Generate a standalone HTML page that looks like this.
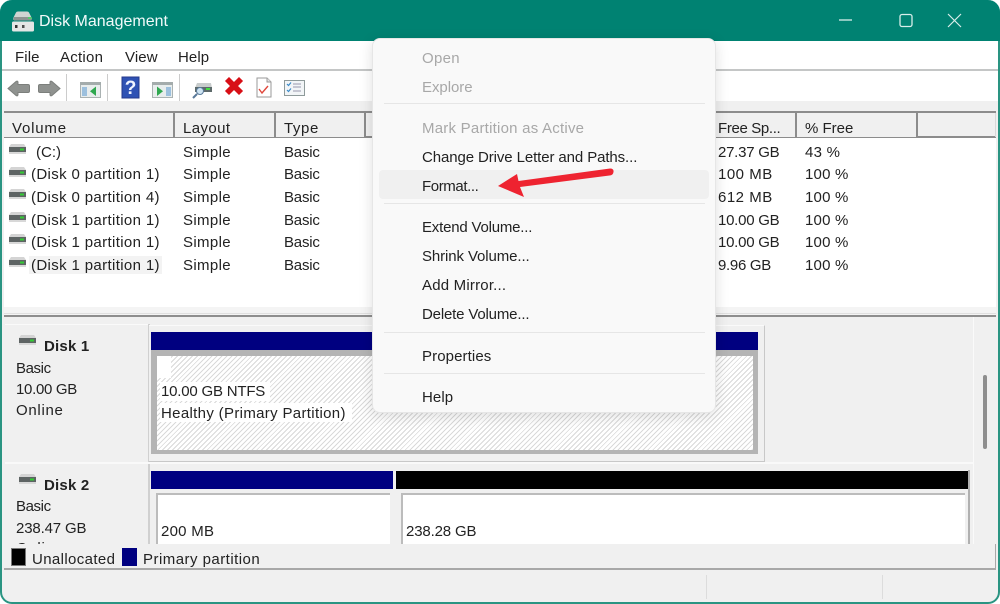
<!DOCTYPE html>
<html><head><meta charset="utf-8"><style>
*{box-sizing:border-box}
html,body{margin:0;padding:0;background:#fff}
body{width:1000px;height:604px;position:relative;overflow:hidden;font-family:"Liberation Sans",sans-serif;font-size:15px;color:#222}
.a{position:absolute}
.t{position:absolute;white-space:nowrap;line-height:18px;height:18px;margin-top:1px}
.hd{position:absolute;top:113px;height:24px;background:#f0f0f0;border-right:2px solid #8c8c8c}
.g{color:#a8a8a8}
.sep{position:absolute;left:384px;width:321px;height:1px;background:#e6e6e6}
.stripes{background:repeating-linear-gradient(135deg,#d9d9d9 0 1px,#fff 1px 3.5px)}
</style></head><body>
<div class="a" style="left:0;top:0;width:1000px;height:604px;background:#f0f0f0;border:2px solid #2a9482;border-top:0;border-radius:12px"></div>
<div class="a" style="left:0;top:0;width:1000px;height:41px;background:#008272;border-radius:12px 12px 0 0"></div>
<svg class="a" style="left:11px;top:11px" width="24" height="22" viewBox="0 0 24 22"><path d="M5 1.500q.5-1 2-1h9q1.500 0 2 1l2.500 5q1 2-1 3H3.500q-2-1-1-3z" fill="#cfd4d2"/><path d="M3 6h17.500q1 2-.5 3.500H3.500q-1.500-1.500-.5-3.500z" fill="#8d9492"/><rect x="17" y="6" width="3.500" height="2" fill="#4fd06a"/><path d="M2.500 10.500h19q1.500 0 1.500 1.500v7q0 1.500-1.500 1.500h-19Q1 20.500 1 19v-7q0-1.500 1.500-1.500z" fill="#e4e6e5"/><rect x="4" y="14" width="2.500" height="3" fill="#333"/><rect x="11" y="14" width="2.500" height="3" fill="#333" opacity=".85"/></svg>
<div class="t" style="left:39px;top:12px;color:#f2fafa;font-size:16px">Disk Management</div>
<svg class="a" style="left:838px;top:12px" width="130" height="18" viewBox="0 0 130 18" fill="none" stroke="#d8eeea" stroke-width="1.3"><path d="M1 8h13"/><rect x="62" y="2.500" width="12" height="12" rx="2"/><path d="M123 2l-13 13M110 2l13 13" stroke-width="1.200"/></svg>

<div class="a" style="left:2px;top:41px;width:996px;height:30px;background:#fff;border-bottom:2px solid #c4c6c6"></div>
<div class="t" style="left:15px;top:48px;letter-spacing:.1px">File</div>
<div class="t" style="left:60px;top:48px;letter-spacing:.25px">Action</div>
<div class="t" style="left:125px;top:48px;letter-spacing:.1px">View</div>
<div class="t" style="left:178px;top:48px;letter-spacing:.1px">Help</div>

<div class="a" style="left:2px;top:71px;width:996px;height:30px;background:#fff"></div>
<div class="a" style="left:2px;top:101px;width:996px;height:10px;background:#f0f0f0"></div>
<svg class="a" style="left:0;top:72px" width="320" height="30" viewBox="0 0 320 30">
<path d="M8 16.500l8-7q1.500-1 2 .5v2.500h10q1.500 0 1.500 1.500v5q0 1.500-1.500 1.500H18v2.500q-.5 1.500-2 .5z" fill="#8f928f" stroke="#7c7f7c" stroke-width="1"/>
<path d="M60 16.500l-8-7q-1.500-1-2 .5v2.500H40q-1.500 0-1.500 1.500v5q0 1.500 1.500 1.500h10v2.500q.5 1.500 2 .5z" fill="#8f928f" stroke="#7c7f7c" stroke-width="1"/>
<rect x="66" y="2" width="1" height="27" fill="#ccc"/><rect x="107" y="2" width="1" height="27" fill="#ccc"/><rect x="179" y="2" width="1" height="27" fill="#ccc"/>
<rect x="80.500" y="10.500" width="20" height="15" fill="#e8eded" stroke="#aab2b2"/><rect x="80" y="10" width="21" height="3" fill="#a4acac"/><rect x="82" y="15" width="5" height="9" fill="#9cc0de"/><path d="M96 14.500v9.500l-6-4.750z" fill="#2fa84f"/>
<rect x="122" y="5" width="17" height="21" fill="#2f52b4" stroke="#25398c"/>
<text x="130.500" y="22" font-family="Liberation Sans" font-weight="bold" font-size="19" fill="#f0f4ff" text-anchor="middle">?</text>
<rect x="152.500" y="10.500" width="20" height="15" fill="#e8eded" stroke="#aab2b2"/><rect x="152" y="10" width="21" height="3" fill="#a4acac"/><rect x="166" y="15" width="5" height="9" fill="#9cc0de"/><path d="M157 14.500v9.500l6-4.750z" fill="#2fa84f"/>
<path d="M197 11h14l1 5h-17z" fill="#c8cccc"/><rect x="195" y="15" width="17" height="5" fill="#5d6a6a"/><rect x="206" y="16" width="4" height="2" fill="#4d4"/><circle cx="200" cy="19" r="3.500" fill="#cfe4f2" stroke="#5a7a9a"/><path d="M197 22l-4 4" stroke="#5a7a9a" stroke-width="2"/>
<path d="M226 9l3-3 5 5 5-5 3 3-5 5 5 5-3 3-5-5-5 5-3-3 5-5z" fill="#d80f16" stroke="#d80f16" stroke-width="1.500"/>
<path d="M257 6h10l4 4v15h-14z" fill="#fff" stroke="#9a9a9a"/><path d="M267 6v4h4" fill="#e4e4e4" stroke="#9a9a9a"/><path d="M259 17l3 4 6-7" fill="none" stroke="#e0483c" stroke-width="1.400"/>
<rect x="284.500" y="8.500" width="20" height="15" fill="#f2f5f7" stroke="#8e9a9a"/><path d="M287 12l1.500 1.500 2.500-3M287 18l1.500 1.500 2.500-3" fill="none" stroke="#3a8ac8" stroke-width="1.200"/><path d="M293 12h8M293 15h8M293 19h8" stroke="#aab" stroke-width="1.200"/>
</svg>

<div class="a" style="left:4px;top:111px;width:992px;height:2px;background:#8c8c8c"></div>
<div class="a" style="left:4px;top:113px;width:992px;height:24px;background:#f0f0f0"></div>
<div class="a" style="left:4px;top:136px;width:992px;height:2px;background:#8c8c8c"></div>
<div class="hd" style="left:4px;width:171px"></div>
<div class="hd" style="left:175px;width:101px"></div>
<div class="hd" style="left:276px;width:90px"></div>
<div class="hd" style="left:716px;width:81px"></div>
<div class="hd" style="left:797px;width:121px"></div>
<div class="a" style="left:995px;top:113px;width:1px;height:24px;background:#d8d8d8"></div>
<div class="t" style="left:12px;top:119px;letter-spacing:.8px">Volume</div>
<div class="t" style="left:183px;top:119px;letter-spacing:.4px">Layout</div>
<div class="t" style="left:284px;top:119px;letter-spacing:.6px">Type</div>
<div class="t" style="left:718px;top:119px;letter-spacing:-.35px">Free Sp...</div>
<div class="t" style="left:805px;top:119px">% Free</div>

<div class="a" style="left:4px;top:138px;width:992px;height:170px;background:#fff"></div>
<div class="a" style="left:4px;top:307px;width:992px;height:10px;background:linear-gradient(#f4f4f4 0 6px,#e0e0e0 6px 7px,#f4f4f4 7px 8px,#8e8e8e 8px 10px)"></div>

<svg width="0" height="0" style="position:absolute"><defs><g id="d"><path d="M2 0h13l2 3H0z" fill="#d4d4d4"/><rect x="0" y="3" width="17" height="5" fill="#5e6464"/><rect x="11" y="4.500" width="4" height="2" fill="#3c3"/><rect x="0" y="8" width="17" height="2" fill="#d8d8d8"/></g></defs></svg>
<svg class="a" style="left:9px;top:144px" width="18" height="11"><use href="#d"/></svg>
<svg class="a" style="left:9px;top:167px" width="18" height="11"><use href="#d"/></svg>
<svg class="a" style="left:9px;top:189px" width="18" height="11"><use href="#d"/></svg>
<svg class="a" style="left:9px;top:212px" width="18" height="11"><use href="#d"/></svg>
<svg class="a" style="left:9px;top:234px" width="18" height="11"><use href="#d"/></svg>
<svg class="a" style="left:9px;top:257px" width="18" height="11"><use href="#d"/></svg>
<div class="a" style="left:29px;top:256px;width:133px;height:18px;background:#f3f3f3"></div>

<div class="t" style="left:36px;top:143px">(C:)</div>
<div class="t" style="left:31px;top:165px;letter-spacing:.36px">(Disk 0 partition 1)</div>
<div class="t" style="left:31px;top:188px;letter-spacing:.36px">(Disk 0 partition 4)</div>
<div class="t" style="left:31px;top:211px;letter-spacing:.36px">(Disk 1 partition 1)</div>
<div class="t" style="left:31px;top:233px;letter-spacing:.36px">(Disk 1 partition 1)</div>
<div class="t" style="left:31px;top:256px;letter-spacing:.36px">(Disk 1 partition 1)</div>
<div class="t" style="left:183px;top:143px;letter-spacing:.35px">Simple</div><div class="t" style="left:284px;top:143px;letter-spacing:-.2px">Basic</div>
<div class="t" style="left:183px;top:165px;letter-spacing:.35px">Simple</div><div class="t" style="left:284px;top:165px;letter-spacing:-.2px">Basic</div>
<div class="t" style="left:183px;top:188px;letter-spacing:.35px">Simple</div><div class="t" style="left:284px;top:188px;letter-spacing:-.2px">Basic</div>
<div class="t" style="left:183px;top:211px;letter-spacing:.35px">Simple</div><div class="t" style="left:284px;top:211px;letter-spacing:-.2px">Basic</div>
<div class="t" style="left:183px;top:233px;letter-spacing:.35px">Simple</div><div class="t" style="left:284px;top:233px;letter-spacing:-.2px">Basic</div>
<div class="t" style="left:183px;top:256px;letter-spacing:.35px">Simple</div><div class="t" style="left:284px;top:256px;letter-spacing:-.2px">Basic</div>
<div class="t" style="left:718px;top:143px;letter-spacing:-.25px">27.37 GB</div><div class="t" style="left:805px;top:143px;letter-spacing:.25px">43 %</div>
<div class="t" style="left:718px;top:165px;letter-spacing:.5px">100 MB</div><div class="t" style="left:805px;top:165px;letter-spacing:.2px">100 %</div>
<div class="t" style="left:718px;top:188px;letter-spacing:.5px">612 MB</div><div class="t" style="left:805px;top:188px;letter-spacing:.2px">100 %</div>
<div class="t" style="left:718px;top:211px;letter-spacing:-.25px">10.00 GB</div><div class="t" style="left:805px;top:211px;letter-spacing:.2px">100 %</div>
<div class="t" style="left:718px;top:233px;letter-spacing:-.25px">10.00 GB</div><div class="t" style="left:805px;top:233px;letter-spacing:.2px">100 %</div>
<div class="t" style="left:718px;top:256px;letter-spacing:-.3px">9.96 GB</div><div class="t" style="left:805px;top:256px;letter-spacing:.2px">100 %</div>

<!-- lower pane -->
<div class="a" style="left:4px;top:317px;width:992px;height:227px;background:#f0f0f0"></div>
<div class="a" style="left:5px;top:324px;width:144px;height:1px;background:#fafafa"></div>
<div class="a" style="left:148px;top:324px;width:2px;height:220px;background:#d0d0d0"></div>
<div class="a" style="left:5px;top:462px;width:968px;height:2px;background:#f9f9f9"></div>
<div class="a" style="left:973px;top:317px;width:1px;height:227px;background:#fafafa"></div>
<div class="a" style="left:983px;top:375px;width:4px;height:74px;background:#8e8e8e;border-radius:2px"></div>

<div class="a" style="left:149px;top:325px;width:616px;height:137px;background:#f0f0f0;border:1px solid #c8c8c8;border-left:0;border-top-color:#fafafa"></div>
<div class="a" style="left:151px;top:332px;width:607px;height:18px;background:#000080"></div>
<div class="a" style="left:151px;top:350px;width:607px;height:104px;background:#b4b4b4"></div>
<div class="a stripes" style="left:157px;top:356px;width:596px;height:94px"></div>
<div class="a" style="left:157px;top:356px;width:14px;height:22px;background:#fff"></div>
<div class="a" style="left:160px;top:382px;width:110px;height:19px;background:#fff"></div>
<div class="a" style="left:160px;top:403px;width:192px;height:19px;background:#fff"></div>
<div class="t" style="left:161px;top:382px;letter-spacing:-.2px">10.00 GB NTFS</div>
<div class="t" style="left:161px;top:404px;letter-spacing:.33px">Healthy (Primary Partition)</div>

<svg class="a" style="left:19px;top:335px" width="18" height="11"><use href="#d"/></svg>
<div class="t" style="left:44px;top:337px;font-weight:bold;letter-spacing:.2px">Disk 1</div>
<div class="t" style="left:16px;top:359px;letter-spacing:-.4px">Basic</div>
<div class="t" style="left:16px;top:380px;letter-spacing:-.3px">10.00 GB</div>
<div class="t" style="left:16px;top:401px;letter-spacing:.7px">Online</div>

<svg class="a" style="left:19px;top:474px" width="18" height="11"><use href="#d"/></svg>
<div class="t" style="left:44px;top:476px;font-weight:bold;letter-spacing:.2px">Disk 2</div>
<div class="t" style="left:16px;top:497px;letter-spacing:-.4px">Basic</div>
<div class="t" style="left:16px;top:519px;letter-spacing:-.15px">238.47 GB</div>
<div class="t" style="left:16px;top:539px;letter-spacing:.7px">Online</div>

<div class="a" style="left:151px;top:471px;width:242px;height:18px;background:#000080"></div>
<div class="a" style="left:396px;top:471px;width:573px;height:18px;background:#000"></div>
<div class="a" style="left:151px;top:489px;width:819px;height:55px;background:#f0f0f0"></div>
<div class="a" style="left:156px;top:493px;width:234px;height:51px;background:#fff;border:2px solid #bcbcbc;border-bottom:0;border-right:0"></div>
<div class="a" style="left:401px;top:493px;width:564px;height:51px;background:#fff;border-top:2px solid #bcbcbc;border-left:2px solid #bcbcbc"></div>
<div class="a" style="left:968px;top:470px;width:2px;height:74px;background:#b0b0b0"></div>
<div class="t" style="left:161px;top:522px;letter-spacing:.25px">200 MB</div>
<div class="t" style="left:406px;top:522px;letter-spacing:-.15px">238.28 GB</div>

<!-- legend -->
<div class="a" style="left:4px;top:544px;width:992px;height:26px;background:#f0f0f0;border-bottom:2px solid #a8a8a8;border-right:1px solid #a8a8a8"></div>
<div class="a" style="left:11px;top:548px;width:15px;height:18px;background:#000;border:1px solid #777"></div>
<div class="a" style="left:122px;top:548px;width:15px;height:18px;background:#000080"></div>
<div class="t" style="left:32px;top:550px;letter-spacing:.37px">Unallocated</div>
<div class="t" style="left:143px;top:550px;letter-spacing:.47px">Primary partition</div>
<div class="a" style="left:706px;top:575px;width:1px;height:24px;background:#dcdcdc"></div>
<div class="a" style="left:882px;top:575px;width:1px;height:24px;background:#dcdcdc"></div>

<!-- context menu -->
<div class="a" style="left:372px;top:38px;width:344px;height:375px;background:#f9f9f9;border:1px solid #e6e6e6;border-radius:8px;box-shadow:0 3px 14px rgba(0,0,0,.13)"></div>
<div class="a" style="left:379px;top:170px;width:330px;height:29px;background:#f0f0f0;border-radius:4px"></div>
<div class="t g" style="left:422px;top:49px;letter-spacing:.3px">Open</div>
<div class="t g" style="left:422px;top:78px;letter-spacing:-.05px">Explore</div>
<div class="sep" style="top:103px"></div>
<div class="t g" style="left:422px;top:119px;letter-spacing:.23px">Mark Partition as Active</div>
<div class="t" style="left:422px;top:148px;letter-spacing:-.1px">Change Drive Letter and Paths...</div>
<div class="t" style="left:422px;top:177px;letter-spacing:-.4px">Format...</div>
<div class="sep" style="top:203px"></div>
<div class="t" style="left:422px;top:218px;letter-spacing:-.2px">Extend Volume...</div>
<div class="t" style="left:422px;top:247px;letter-spacing:-.1px">Shrink Volume...</div>
<div class="t" style="left:422px;top:276px;letter-spacing:.2px">Add Mirror...</div>
<div class="t" style="left:422px;top:305px;letter-spacing:-.17px">Delete Volume...</div>
<div class="sep" style="top:332px"></div>
<div class="t" style="left:422px;top:347px;letter-spacing:.1px">Properties</div>
<div class="sep" style="top:373px"></div>
<div class="t" style="left:422px;top:388px;letter-spacing:.1px">Help</div>
<svg class="a" style="left:495px;top:165px" width="125" height="35" viewBox="0 0 125 35"><path d="M3 21L22 9l1.500 7L115 3.500q4 0 3.500 3.500t-4 3.500L25 22l4 10z" fill="#ee2330"/></svg>
</body></html>
